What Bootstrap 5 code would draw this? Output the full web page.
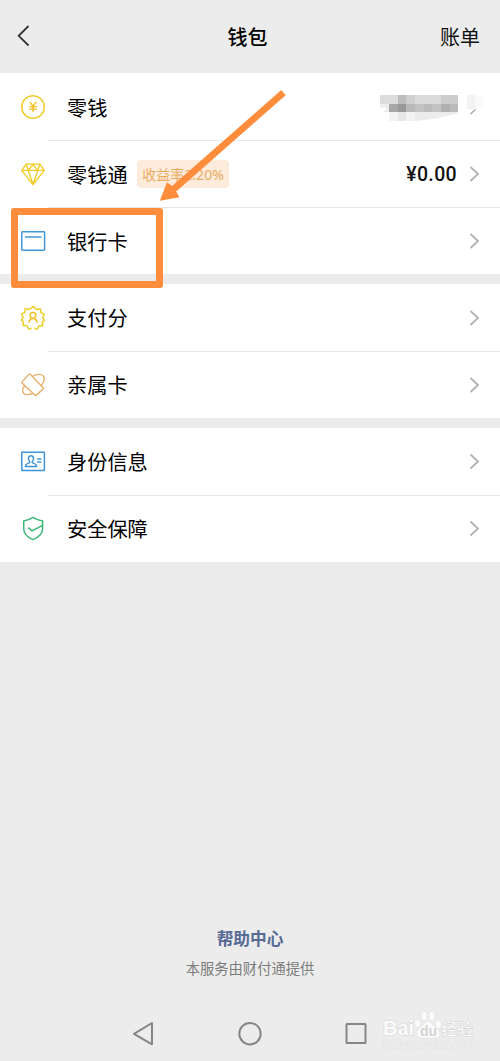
<!DOCTYPE html>
<html lang="zh-CN">
<head>
<meta charset="utf-8">
<meta name="viewport" content="width=device-width, initial-scale=1">
<title>钱包</title>
<link href="https://cdn.jsdelivr.net/npm/bootstrap@5.3.0/dist/css/bootstrap.min.css" rel="stylesheet">
<style>
body{background:#ececec;color:#111;font-family:"Noto Sans CJK SC",sans-serif;font-size:20px;line-height:30px;height:1061px;overflow:hidden}
svg{display:block;fill:none;flex:none}
.topbar{height:73px;padding-right:20px}
.topbar h1{font-size:20px;line-height:30px;font-weight:500;color:#000;padding-right:5px}
.group{background:#fff;margin-bottom:10px}
.item{height:67px;padding:0 18px 0 19px}
.item+.item::before{content:"";position:absolute;left:48px;right:0;top:0;height:1px;background:#e9e9e9}
.item .title{margin-left:20px;padding-top:2px;font-size:20.2px;color:#000}
.group+.group .title{padding-top:1px}
.rate{margin-left:9.5px;width:92px;height:28px;border-radius:4px;background:#fdebdc;color:#e8ab62;font-size:14px;line-height:29px}
.rate span{font-family:"Noto Sans",sans-serif}
.amount{font-family:Roboto,sans-serif;font-size:19.5px;letter-spacing:.35px;color:#111;margin-right:9px;padding-top:2px}
.arrow{stroke:#b2b2b2;stroke-width:1.8}
.help{font-size:16.7px;line-height:24px;font-weight:700;color:#576b95}
.provider{font-size:14.3px;line-height:22px;color:#7c7c7c;margin:7px 0 26px}
.navkeys{height:56px;stroke:#858585;stroke-width:2}
.overlay{pointer-events:none}
.frame{left:11px;top:208px;width:152px;height:80px;border:7px solid #ff8d3b;border-radius:3px}
.blurred{right:16px;top:18px}
.watermark{left:378px;top:1003px}
</style>
</head>
<body class="position-relative d-flex flex-column">
<header class="topbar position-relative d-flex align-items-center justify-content-between">
  <svg width="50" height="40" viewBox="0 0 50 40" stroke="#333" stroke-width="1.8"><path d="M28.500 9 18.700 18.800 28.500 28.500"/></svg>
  <h1 class="position-absolute start-50 translate-middle-x m-0">钱包</h1>
  <span>账单</span>
</header>

<main>
<section class="group">
  <div class="item position-relative d-flex align-items-center">
    <svg width="28" height="28" viewBox="0 0 28 28" stroke="#f0cc2c" stroke-width="1.5"><circle cx="14" cy="14" r="11.3"/><path stroke="#f3bd16" stroke-width="1.3" d="M10.800 8.800 14 13.200l3.200-4.400M10.200 13.600h7.600M10.200 16.200h7.600M14 13.200v5.800"/></svg>
    <span class="title">零钱</span>
    <svg class="blurred position-absolute" width="106" height="34" viewBox="378 91 106 34" shape-rendering="crispEdges">
      <path fill="#dcdcdc" d="M380 95h18v9h-18z"/><path fill="#bdbdbd" d="M398 95h8v9h-8z"/><path fill="#cfcfcf" d="M406 95h9v9h-9z"/><path fill="#dbdbdb" d="M415 95h26v9h-26z"/><path fill="#cdcdcd" d="M441 95h17v9h-17z"/>
      <path fill="#eee" d="M380 104h9v8h-5v-2h2v-2h-6z"/><path fill="#a8a8a8" d="M389 104h9v8h-9z"/><path fill="#999" d="M398 104h8v8h-8z"/><path fill="#bababa" d="M406 104h52v8h-52z"/><path fill="#c2c2c2" d="M415 104h9v8h-9zM432 104h9v8h-9z"/><path fill="#b0b0b0" d="M441 104h9v8h-9z"/>
      <path fill="#f3f3f3" d="M389 112h9v9h-9zM406 112h9v9h-9z"/><path fill="#e7e7e7" d="M398 112h8v9h-8z"/><path fill="#ececec" shape-rendering="auto" d="M415 112h43v1l-24 6-19 2z"/><path fill="#f3f3f3" d="M467 95h8v9h-8zM467 104h9v5h-9z"/><path fill="#fafafa" d="M475 96h9v10h-9z"/><path stroke="#aaa" stroke-width="1.6" shape-rendering="auto" d="m470.500 114 5-4.500"/>
    </svg>
  </div>
  <div class="item position-relative d-flex align-items-center">
    <svg width="28" height="28" viewBox="0 0 28 28" stroke="#f0cb20" stroke-width="1.3" stroke-linejoin="round"><path d="M7.200 4.200h13.600l4.500 6.100L14 24.700 2.700 10.300zM2.700 10.300h22.600M7.200 4.200l2 6.100L14 24.200l4.800-13.900 2-6.100M9.200 10.300 14 4.600l4.800 5.700"/></svg>
    <span class="title">零钱通</span>
    <span class="rate text-center">收益率<span>2.20%</span></span>
    <span class="amount ms-auto fw-medium">¥0.00</span>
    <svg class="arrow" width="16" height="20" viewBox="0 0 16 20"><path d="m4.500 3 7.500 7-7.500 7"/></svg>
  </div>
  <div class="item position-relative d-flex align-items-center">
    <svg width="28" height="28" viewBox="0 0 28 28" stroke="#4299d8" stroke-width="1.500"><rect x="2.800" y="4.800" width="22.800" height="18.400" rx=".7"/><path d="M6 10h16.500"/></svg>
    <span class="title">银行卡</span>
    <svg class="arrow ms-auto" width="16" height="20" viewBox="0 0 16 20"><path d="m4.500 3 7.500 7-7.500 7"/></svg>
  </div>
</section>

<section class="group">
  <div class="item position-relative d-flex align-items-center">
    <svg width="28" height="28" viewBox="0 0 28 28" stroke="#eccf2b" stroke-width="1.500" stroke-linejoin="round"><path d="M12.600 24.200 9.600 25l-1.800-3.500-3.900.1.400-3.800-2-1.900 1.800-2.400L2.500 10l3.300-1.400.4-3.800 3.800.6L14 2.600l3.600 2.800 3.900-.5.500 3.800 3.300 1.400-1.500 3.500 1.600 2.600-2 1.700.4 3.800-3.800.1-1.800 3.300-3.200-1"/><g stroke="#efc02e"><circle cx="14" cy="11.400" r="2.900"/><path d="M10 18.800c.2-2.800 1.300-4.400 4-4.400s3.800 1.600 4 4.400"/></g></svg>
    <span class="title">支付分</span>
    <svg class="arrow ms-auto" width="16" height="20" viewBox="0 0 16 20"><path d="m4.500 3 7.500 7-7.500 7"/></svg>
  </div>
  <div class="item position-relative d-flex align-items-center">
    <svg width="28" height="28" viewBox="0 0 28 28" stroke="#e7b06c" stroke-width="1.400" stroke-linejoin="round"><path d="M3.300 10.600 9.800 3.400q.9-.8 1.700 0L24 16.700q.7.900 0 1.600l-6.500 5.600q-.9.700-1.700 0L3.200 12.200q-.7-.8.1-1.600zM13.600 5.400c4.200-2.600 8.700-2.700 10.600-.5 1.800 2.200.8 6.100-1.900 9.300M5.600 14.500c-2 3-2.600 6.100-.9 7.900 1.800 1.800 5.400 1.400 9.200-.3"/></svg>
    <span class="title">亲属卡</span>
    <svg class="arrow ms-auto" width="16" height="20" viewBox="0 0 16 20"><path d="m4.500 3 7.500 7-7.500 7"/></svg>
  </div>
</section>

<section class="group">
  <div class="item position-relative d-flex align-items-center">
    <svg width="28" height="28" viewBox="0 0 28 28" stroke="#3d95d9" stroke-width="1.500" stroke-linejoin="round"><rect x="2.800" y="4.200" width="22.600" height="18.400" rx=".6"/><path d="M10.800 13.700c-1.900-1.700-2-6 1.200-6s3.100 4.300 1.200 6c-.3 1 .5 1.300 2.300 1.900 1.700.6 2.200 1.200 2.200 3H6.300c0-1.800.5-2.400 2.200-3 1.800-.6 2.600-.9 2.300-1.900zM18.200 11h4.200M18.200 14h4.200"/></svg>
    <span class="title">身份信息</span>
    <svg class="arrow ms-auto" width="16" height="20" viewBox="0 0 16 20"><path d="m4.500 2.500 7.500 7-7.500 7"/></svg>
  </div>
  <div class="item position-relative d-flex align-items-center">
    <svg width="28" height="28" viewBox="0 0 28 28" stroke="#3cb878" stroke-width="1.500" stroke-linejoin="round"><path d="M23.600 10.300V6C20 5.500 17 4.400 14 2.400 11 4.400 8 5.500 4.700 6v7.500c0 5.200 3.800 8.900 9.300 11.100 5.500-2.200 9.600-5.900 9.600-11.100v-3.200L13.100 15.900 9.200 12.700"/></svg>
    <span class="title">安全保障</span>
    <svg class="arrow ms-auto" width="16" height="20" viewBox="0 0 16 20"><path d="m4.500 2.500 7.500 7-7.500 7"/></svg>
  </div>
</section>
</main>

<footer class="mt-auto text-center">
  <div class="help">帮助中心</div>
  <div class="provider">本服务由财付通提供</div>
  <div class="navkeys d-flex justify-content-center">
    <svg width="260" height="56" viewBox="0 0 260 56" stroke-linejoin="round"><path d="M32 18v21.300L14 28.800z"/><circle cx="130" cy="28.700" r="10.700"/><rect x="226.500" y="19" width="19" height="19" rx=".5"/></svg>
  </div>
</footer>

<div class="frame overlay position-absolute"></div>
<svg class="overlay position-absolute top-0 start-0" width="300" height="215" viewBox="0 0 300 215"><path fill="#ff8d3b" d="m281.300 90 4.400 5.200L176.200 191.600l3.300 5.700-19.700 3.500 7.200-18.600 5 3.700z"/></svg>
<svg class="watermark overlay position-absolute" width="102" height="50" viewBox="0 0 102 50">
  <g fill="#fbfbfb" stroke="#d8d8d8" stroke-width="1.200" stroke-linejoin="round">
    <text x="5" y="32" font-size="20" font-weight="700" font-family="Liberation Sans, sans-serif" textLength="31" paint-order="stroke">Bai</text>
    <g stroke-width=".4"><ellipse cx="39.500" cy="20.500" rx="3" ry="4"/><ellipse cx="46" cy="13" rx="3" ry="4.500"/><ellipse cx="54" cy="13" rx="3" ry="4.500"/><ellipse cx="60.500" cy="21.500" rx="3" ry="4"/><path d="M50 18.500c-4 0-5 5-9 7-4 3-3 9.500 3 9.500h13c6 0 6-6.500 2-9.500-4-2-5-7-9-7z"/></g>
    <text x="63" y="32" font-size="16" font-family="Noto Sans CJK SC, sans-serif" paint-order="stroke">经验</text>
    <text x="5" y="45" font-size="11" font-family="Liberation Sans, sans-serif" fill="#f2f2f2" stroke="#e0e0e0" stroke-width=".8" textLength="91" paint-order="stroke">jingyan.baidu.com</text>
  </g>
  <text x="42" y="33" font-size="14" font-weight="700" font-family="Liberation Sans, sans-serif" fill="#d4d4d4">du</text>
</svg>
<script src="https://cdn.jsdelivr.net/npm/bootstrap@5.3.0/dist/js/bootstrap.bundle.min.js"></script>
</body>
</html>
